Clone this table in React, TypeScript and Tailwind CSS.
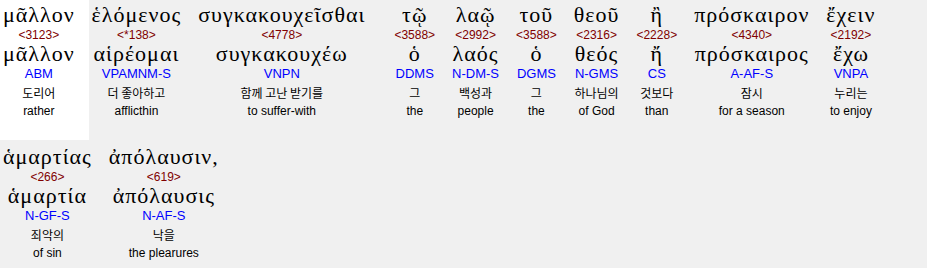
import React from "react";

type Word = {
  greek: string;
  strong: string;
  lemma: string;
  morph: string;
  ko: string;
  en: string;
  active?: boolean;
  wide?: boolean;
};

const words: Word[] = [
  { greek: "μᾶλλον", strong: "<3123>", lemma: "μᾶλλον", morph: "ABM", ko: "도리어", en: "rather", active: true },
  { greek: "ἑλόμενος", strong: "<*138>", lemma: "αἱρέομαι", morph: "VPAMNM-S", ko: "더 좋아하고", en: "afflicthin" },
  { greek: "συγκακουχεῖσθαι", strong: "<4778>", lemma: "συγκακουχέω", morph: "VNPN", ko: "함께 고난 받기를", en: "to suffer-with", wide: true },
  { greek: "τῷ", strong: "<3588>", lemma: "ὁ", morph: "DDMS", ko: "그", en: "the" },
  { greek: "λαῷ", strong: "<2992>", lemma: "λαός", morph: "N-DM-S", ko: "백성과", en: "people" },
  { greek: "τοῦ", strong: "<3588>", lemma: "ὁ", morph: "DGMS", ko: "그", en: "the" },
  { greek: "θεοῦ", strong: "<2316>", lemma: "θεός", morph: "N-GMS", ko: "하나님의", en: "of God" },
  { greek: "ἢ", strong: "<2228>", lemma: "ἤ", morph: "CS", ko: "것보다", en: "than" },
  { greek: "πρόσκαιρον", strong: "<4340>", lemma: "πρόσκαιρος", morph: "A-AF-S", ko: "잠시", en: "for a season" },
  { greek: "ἔχειν", strong: "<2192>", lemma: "ἔχω", morph: "VNPA", ko: "누리는", en: "to enjoy" },
  { greek: "ἁμαρτίας", strong: "<266>", lemma: "ἁμαρτία", morph: "N-GF-S", ko: "죄악의", en: "of sin" },
  { greek: "ἀπόλαυσιν,", strong: "<619>", lemma: "ἀπόλαυσις", morph: "N-AF-S", ko: "낙을", en: "the plearures" },
];

function WordCell({ w }: { w: Word }) {
  return (
    <div
      className={`flex flex-col items-center h-[140px] pl-[3px] pt-[3px] ${
        w.wide ? "pr-[26px]" : "pr-[14px]"
      } ${w.active ? "bg-white" : ""}`}
    >
      <div className="h-[24px] leading-[24px] text-[22px] tracking-[1px] text-black whitespace-nowrap font-['Liberation_Serif',serif]">
        {w.greek}
      </div>
      <div className="h-[16px] leading-[16px] text-[12px] text-[#800000] font-['Liberation_Sans',Arial,sans-serif]">
        {w.strong}
      </div>
      <div className="h-[21px] leading-[21px] text-[22px] tracking-[1px] text-black whitespace-nowrap font-['Liberation_Serif',serif]">
        {w.lemma}
      </div>
      <div className="h-[20px] leading-[20px] text-[13px] text-[#0000ff] font-['Liberation_Sans',Arial,sans-serif]">
        {w.morph}
      </div>
      <div className="h-[18px] leading-[18px] text-[12px] text-black whitespace-nowrap font-['Noto_Sans_CJK_KR',sans-serif]">
        {w.ko}
      </div>
      <div className="h-[18px] leading-[18px] text-[12px] text-black whitespace-nowrap font-['Liberation_Sans',Arial,sans-serif]">
        {w.en}
      </div>
    </div>
  );
}

export default function App() {
  return (
    <div className="w-[927px] h-[268px] bg-[#f0f0f0] overflow-hidden">
      <div className="flex flex-wrap gap-y-[2px]">
        {words.map((w, i) => (
          <WordCell key={i} w={w} />
        ))}
      </div>
    </div>
  );
}
